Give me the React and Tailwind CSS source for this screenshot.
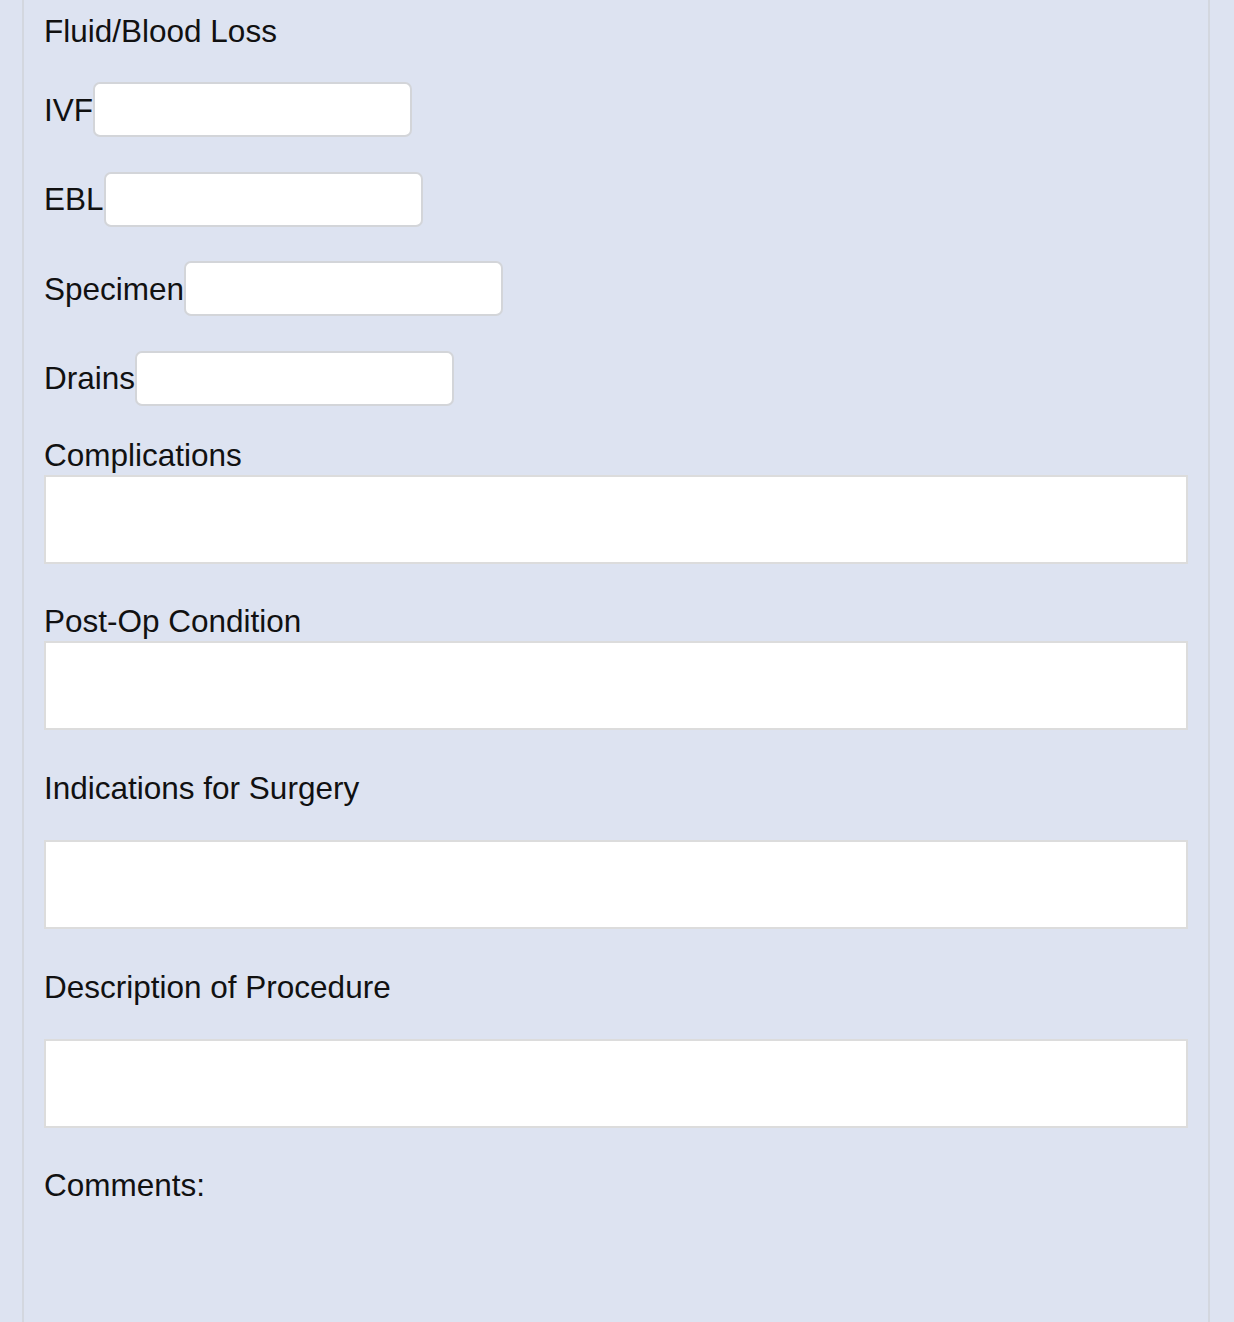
import React from 'react';

const font = { fontFamily: '"Liberation Sans", Arial, sans-serif' };

const InlineField = ({ label }) => (
  <div className="flex items-center h-[55px]">
    <span className="leading-[36px]">{label}</span>
    <input
      type="text"
      className="shrink-0 w-[319px] h-[55px] bg-white border-2 border-[#d3d5d9] rounded-[7px] outline-none"
    />
  </div>
);

const AreaField = ({ label, gap }) => (
  <div className="flex flex-col">
    <span className="leading-[36px]">{label}</span>
    <textarea
      className={
        'w-full h-[89px] bg-white border-2 border-[#dcdcdc] resize-none outline-none ' + gap
      }
    />
  </div>
);

export default function App() {
  return (
    <div className="w-[1234px] h-[1322px] overflow-hidden bg-[#dde3f1]" style={font}>
      <div className="ml-[22px] w-[1188px] min-h-[1322px] border-x-2 border-[#d3d7df] px-[20px] pt-[13px] text-[31.5px] text-[#111]">
        <div className="leading-[36px]">Fluid/Blood Loss</div>

        <div className="flex flex-col gap-[34.5px] mt-[33px]">
          <InlineField label="IVF" />
          <InlineField label="EBL" />
          <InlineField label="Specimen" />
          <InlineField label="Drains" />
        </div>

        <div className="flex flex-col mt-[31px]">
          <AreaField label="Complications" gap="mt-[2px]" />
          <div className="mt-[39px]">
            <AreaField label="Post-Op Condition" gap="mt-[2px]" />
          </div>
          <div className="mt-[40px]">
            <AreaField label="Indications for Surgery" gap="mt-[34px]" />
          </div>
          <div className="mt-[40px]">
            <AreaField label="Description of Procedure" gap="mt-[34px]" />
          </div>
          <div className="mt-[39px] leading-[36px]">Comments:</div>
        </div>
      </div>
    </div>
  );
}
